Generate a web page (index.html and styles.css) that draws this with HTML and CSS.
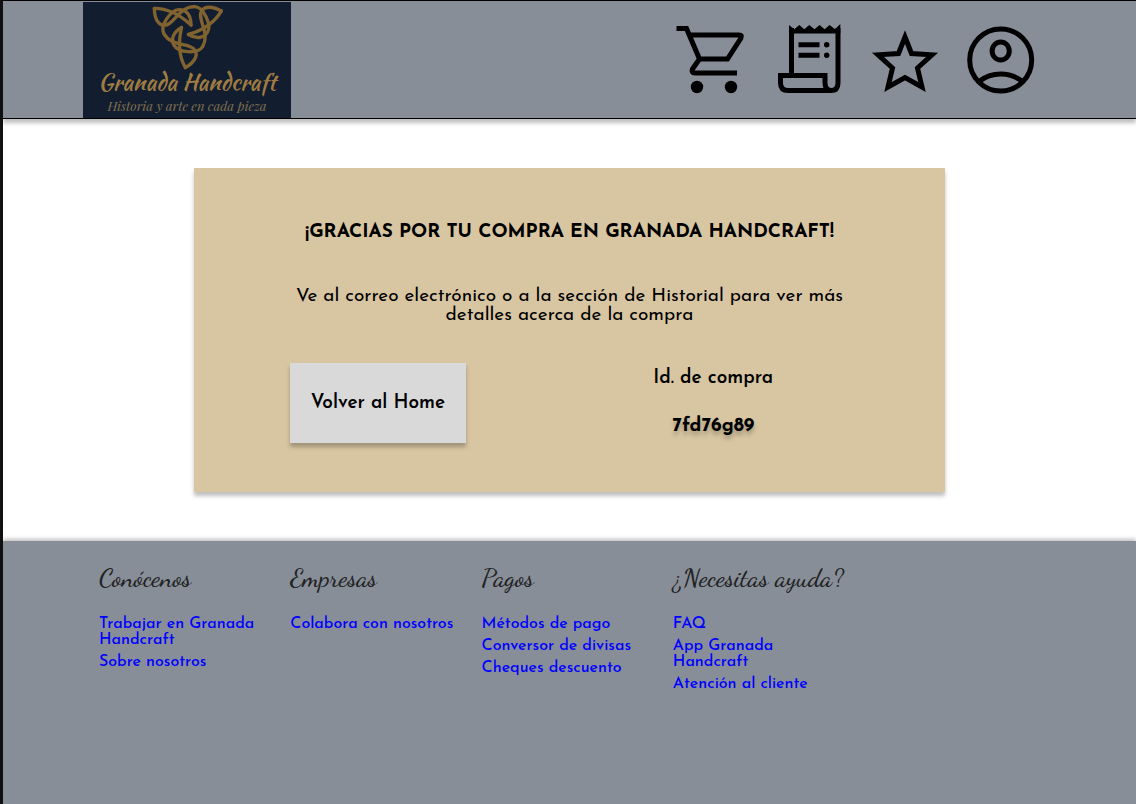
FILE: index.html
```html
<!DOCTYPE html>
<html lang="es">
<head>
<meta charset="utf-8">
<meta name="viewport" content="width=device-width, initial-scale=1">
<title>Granada Handcraft</title>
<link rel="stylesheet" href="styles.css">
</head>
<body class="page">
<header class="header">
  <a class="logo" href="#">
    <svg class="logo-mark" viewBox="15 12 216 198" aria-hidden="true">
      <defs>
        <g id="knot">
          <path d="M-98-62C-60-62-20-42 12-12"/>
          <path d="M-98-62C-98-30-85-11-68-11C-40-11-25-67 22-67"/>
          <path d="M12-12C12-45-5-58-23-58C-48-58-83-10-69 14.500"/>
        </g>
      </defs>
      <g transform="translate(123 87)">
        <use href="#knot"/>
        <use href="#knot" transform="rotate(120)"/>
        <use href="#knot" transform="rotate(240)"/>
      </g>
    </svg>
    <span class="logo-name">Granada Handcraft</span>
    <span class="logo-tagline">Historia y arte en cada pieza</span>
  </a>
  <nav class="actions" aria-label="Cuenta">
    <a class="action" href="#" aria-label="Carrito">
      <svg viewBox="0 0 80 80">
        <path d="M3.500 8.500H13.500L26.500 39H54.500L68 18Q69.500 15 66 15H17M26.500 39L19.500 49Q18 53 22 53H64"/>
        <circle class="solid" cx="24" cy="67" r="6.200"/>
        <circle class="solid" cx="58" cy="67" r="6.200"/>
      </svg>
    </a>
    <a class="action" href="#" aria-label="Historial">
      <svg viewBox="0 0 80 80">
        <path class="solid" d="M20 5L25.300 9.300 30.300 5 35.300 9.300 40.300 5 45.500 9.300 50.600 5 55.600 9.300 60.600 5 66 9.300 71.300 4V13.500H20Z"/>
        <path d="M22.500 8V55M69 8V63Q69 70.500 62 70.500H19Q11.500 70.500 11.500 63V55.500H56V63Q56 70.500 62.500 70.500"/>
        <path d="M29.500 24.700H50.500M29.500 35.300H50.500"/>
        <circle class="solid" cx="57.700" cy="24.700" r="2.700"/>
        <circle class="solid" cx="57.700" cy="35.300" r="2.700"/>
      </svg>
    </a>
    <a class="action" href="#" aria-label="Favoritos">
      <svg viewBox="0 0 80 80">
        <path d="M40 17L46.500 33.500 67 34.800 52.500 48 57 67 40 57.500 23 67 27.500 48 13 34.800 33.500 33.500Z"/>
      </svg>
    </a>
    <a class="action" href="#" aria-label="Perfil">
      <svg viewBox="0 0 80 80">
        <circle cx="39.700" cy="40" r="31"/>
        <ellipse cx="39.700" cy="31" rx="8.600" ry="9"/>
        <path d="M18 61.500Q27.500 54 39.700 54T61.500 61.500"/>
      </svg>
    </a>
  </nav>
</header>

<main class="main">
  <section class="card">
    <h1 class="card-title">¡GRACIAS POR TU COMPRA EN GRANADA HANDCRAFT!</h1>
    <p class="card-text">Ve al correo electrónico o a la sección de Historial para ver más detalles acerca de la compra</p>
    <div class="card-row">
      <button class="home-button" type="button">Volver al Home</button>
      <dl class="order">
        <dt class="order-label">Id. de compra</dt>
        <dd class="order-id">7fd76g89</dd>
      </dl>
    </div>
  </section>
</main>

<footer class="footer">
  <section>
    <h2 class="footer-title">Conócenos</h2>
    <ul class="links">
      <li><a href="#">Trabajar en Granada Handcraft</a></li>
      <li><a href="#">Sobre nosotros</a></li>
    </ul>
  </section>
  <section>
    <h2 class="footer-title">Empresas</h2>
    <ul class="links">
      <li><a href="#">Colabora con nosotros</a></li>
    </ul>
  </section>
  <section>
    <h2 class="footer-title">Pagos</h2>
    <ul class="links">
      <li><a href="#">Métodos de pago</a></li>
      <li><a href="#">Conversor de divisas</a></li>
      <li><a href="#">Cheques descuento</a></li>
    </ul>
  </section>
  <section>
    <h2 class="footer-title">¿Necesitas ayuda?</h2>
    <ul class="links">
      <li><a href="#">FAQ</a></li>
      <li><a href="#">App Granada Handcraft</a></li>
      <li><a href="#">Atención al cliente</a></li>
    </ul>
  </section>
</footer>
</body>
</html>
```
FILE: styles.css
```css
* {
  box-sizing: border-box;
}

.page {
  display: flex;
  flex-direction: column;
  min-height: 100vh;
  margin: 0;
  border-left: 3px solid #111;
  background: #fff;
  color: #000;
  font-family: "Josefin Sans", Lato, sans-serif;
}

.header {
  display: flex;
  align-items: center;
  justify-content: space-between;
  padding: 0 95px 0 80px;
  border-top: 1px solid #000;
  border-bottom: 1px solid #000;
  background: #878e98;
  box-shadow: 0 4px 4px rgba(0, 0, 0, 0.25);
}

.logo {
  display: flex;
  flex-direction: column;
  align-items: center;
  width: 208px;
  margin-top: 1px;
  padding-top: 2px;
  background: #121e30;
  color: #a07c42;
  text-decoration: none;
  white-space: nowrap;
}

.logo-mark {
  width: 72px;
  height: 66px;
  fill: none;
  stroke: #80632f;
  stroke-width: 10;
  stroke-linejoin: round;
  stroke-linecap: round;
}

.logo-name {
  font-family: "Kaushan Script", "Liberation Serif", serif;
  font-size: 23px;
  line-height: 24px;
}

.logo-tagline {
  color: #80704f;
  font-family: "Playfair Display", "Liberation Serif", serif;
  font-size: 13px;
  font-style: italic;
  line-height: 24px;
}

.actions {
  display: flex;
  gap: 16px;
}

.action {
  display: block;
  width: 80px;
  height: 80px;
}

.action svg {
  display: block;
  width: 100%;
  height: 100%;
  fill: none;
  stroke: #000;
  stroke-width: 5;
}

.action .solid {
  fill: #000;
  stroke: none;
}

.main {
  padding: 49px 191px;
}

.card {
  padding: 55px 96px 49px;
  background: #d8c6a2;
  box-shadow: 0 4px 4px rgba(0, 0, 0, 0.25);
  font-size: 19px;
  line-height: 19px;
  text-align: center;
}

.card-title {
  margin: 0 0 44px;
  font-size: 19px;
  font-weight: 700;
  line-height: 20px;
}

.card-text {
  margin: 0 0 38px;
}

.card-row {
  display: grid;
  grid-template-columns: 1fr 1fr;
  gap: 16px;
}

.home-button {
  justify-self: start;
  width: 176px;
  height: 80px;
  border: 0;
  background: #d9d9d9;
  box-shadow: 0 4px 4px rgba(0, 0, 0, 0.25);
  color: #000;
  font: inherit;
  font-weight: 600;
}

.order {
  display: grid;
  align-content: start;
  gap: 29px;
  margin: 0;
  padding-top: 6px;
}

.order-label {
  font-weight: 600;
}

.order-id {
  margin: 0;
  font-weight: 700;
  text-shadow: 0 4px 4px rgba(0, 0, 0, 0.25);
}

.footer {
  flex: 1;
  display: grid;
  grid-template-columns: repeat(5, 1fr);
  gap: 24px;
  padding: 21px 101px 48px 96px;
  background: #878e98;
  box-shadow: 0 -2px 4px rgba(0, 0, 0, 0.25);
}

.footer-title {
  margin: 0 0 22px;
  color: #222;
  font-family: "Dancing Script", "Liberation Serif", serif;
  font-size: 26px;
  font-weight: 500;
  line-height: 32px;
  white-space: nowrap;
}

.links {
  display: grid;
  gap: 6px;
  margin: 0;
  padding: 0;
  list-style: none;
  font-size: 16px;
  font-weight: 500;
  line-height: 16px;
}

.links a {
  color: #00f;
  text-decoration: none;
}
```
